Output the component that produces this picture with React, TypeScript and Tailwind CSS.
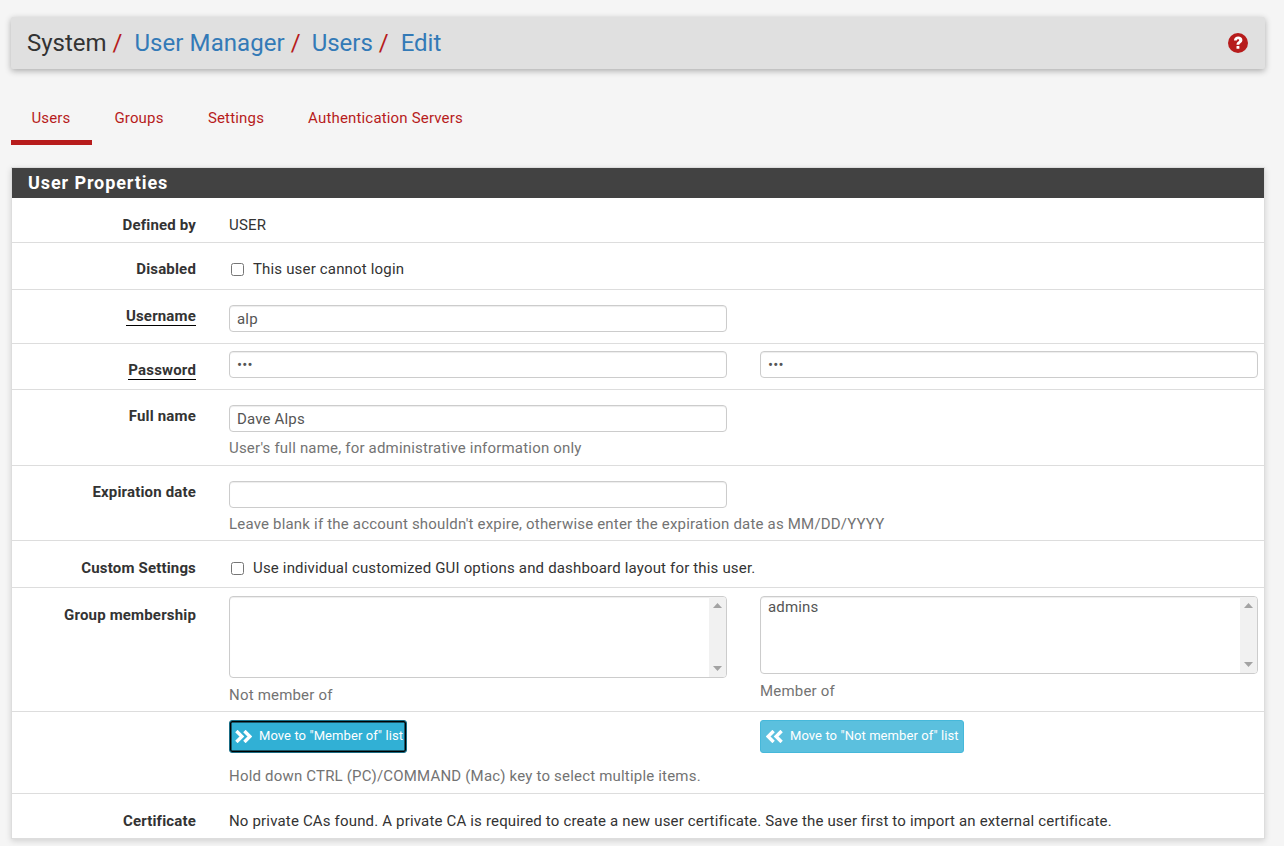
import type { ReactNode } from "react";

function Row({ label, underline, className, children }: { label?: string; underline?: boolean; className: string; children: ReactNode }) {
  return (
    <div className={`flex border-b border-[#dddddd] ${className}`}>
      <div className="w-[184px] shrink-0 text-right font-bold leading-[20px] tracking-[0.17px] text-[#333333]">
        {label && <span className={underline ? "border-b border-black" : ""}>{label}</span>}
      </div>
      <div className="ml-[33px] flex-1">{children}</div>
    </div>
  );
}

function TextInput({ value, type = "text" }: { value: string; type?: string }) {
  return (
    <input
      readOnly
      type={type}
      value={value}
      className="block h-[27px] w-[498px] rounded-[4px] border border-[#cccccc] bg-white px-[7px] text-[15px] tracking-[0.17px] text-[#555555] shadow-[inset_0_1px_1px_rgba(0,0,0,0.075)] outline-none"
    />
  );
}

function ListBox({ height, items }: { height: string; items: string[] }) {
  return (
    <div className={`flex w-[498px] overflow-hidden rounded-[4px] border border-[#cccccc] bg-white shadow-[inset_0_1px_1px_rgba(0,0,0,0.075)] ${height}`}>
      <div className="flex-1 px-[7px] pt-[2px] leading-[17px] text-[#555555]">
        {items.map((item) => (
          <div key={item}>{item}</div>
        ))}
      </div>
      <div className="flex w-[17px] flex-col items-center justify-between bg-[#f1f1f1] py-[6px]">
        <svg width="9" height="5" viewBox="0 0 9 5" className="fill-[#a3a3a3]">
          <path d="M4.5 0L9 5H0z" />
        </svg>
        <svg width="9" height="5" viewBox="0 0 9 5" className="fill-[#a3a3a3]">
          <path d="M0 0h9L4.5 5z" />
        </svg>
      </div>
    </div>
  );
}

function AnglesIcon({ flip }: { flip?: boolean }) {
  return (
    <svg width="17" height="13" viewBox="0 0 17 13" fill="none" stroke="#ffffff" strokeWidth="3.4" className={`mr-[7px] shrink-0 ${flip ? "-scale-x-100" : ""}`}>
      <path d="M1.4 1l5.5 5.5-5.5 5.5" />
      <path d="M9.4 1l5.5 5.5-5.5 5.5" />
    </svg>
  );
}

const hint = "leading-[20px] tracking-[0.19px] text-[#737373]";

export default function App() {
  return (
    <div className="h-[846px] overflow-hidden bg-[#f5f5f5] px-[11px] pt-[17px] font-['Roboto',sans-serif] text-[15px] tracking-[0.17px] text-[#333333]">
      <div className="flex h-[52px] w-[1254px] items-center justify-between rounded-[2px] bg-[#e0e0e0] px-[16px] tracking-normal shadow-[0_2px_6px_rgba(0,0,0,0.3)]">
        <h1 className="text-[24px] leading-[26px] text-[#333333]">
          System<span className="text-[#b71c1c]"> / </span>
          <span className="ml-[6px] tracking-[0.08px] text-[#337ab7]">User Manager</span>
          <span className="text-[#b71c1c]"> / </span>
          <span className="ml-[5px] text-[#337ab7]">Users</span>
          <span className="text-[#b71c1c]"> / </span>
          <span className="ml-[6px] text-[#337ab7]">Edit</span>
        </h1>
        <svg width="20" height="20" viewBox="0 0 20 20" className="mr-[1px]">
          <circle cx="10" cy="10" r="10" fill="#b71c1c" />
          <path d="M5.9 7.4C6.1 4.9 7.9 3.5 10.2 3.5c2.4 0 4.2 1.4 4.2 3.6 0 1.6-.9 2.4-1.9 3.1-.8.5-1.1.9-1.1 1.6H8.5c0-1.7.5-2.4 1.5-3.1.8-.5 1.2-.9 1.2-1.4 0-.6-.5-1-1.1-1-.7 0-1.2.5-1.3 1.3z" fill="#ffffff" />
          <rect x="8.5" y="12.9" width="2.9" height="2.9" rx="0.4" fill="#ffffff" />
        </svg>
      </div>

      <nav className="mt-[23px] flex h-[53px] text-[#b71c1c]">
        <a className="box-content flex w-[80px] items-center justify-center border-b-[5px] border-[#b71c1c] pr-[1px] pt-[5px]">Users</a>
        <a className="flex w-[94px] items-center justify-center">Groups</a>
        <a className="flex w-[100px] items-center justify-center">Settings</a>
        <a className="flex w-[199px] items-center justify-center">Authentication Servers</a>
      </nav>

      <section className="mt-[22px] w-[1254px] border border-[#dddddd] bg-white shadow-[0_2px_6px_rgba(0,0,0,0.15)]">
        <h2 className="flex h-[30px] items-center bg-[#424242] pb-[2px] pl-[16px] text-[18px] font-bold tracking-[0.9px] text-white">User Properties</h2>

        <Row label="Defined by" className="h-[45px] pt-[17px]">
          <div className="leading-[20px]">USER</div>
        </Row>
        <Row label="Disabled" className="h-[47px] pt-[16px]">
          <label className="flex items-center leading-[20px]">
            <input type="checkbox" className="ml-[2px] mr-[9px] h-[13px] w-[13px]" />
            This user cannot login
          </label>
        </Row>
        <Row label="Username" underline className="h-[54px] pt-[16px]">
          <div className="-mt-[1px]">
            <TextInput value="alp" />
          </div>
        </Row>
        <Row label="Password" underline className="h-[46px] pt-[16px]">
          <div className="-mt-[9px] flex gap-[33px]">
            <TextInput type="password" value="abc" />
            <TextInput type="password" value="abc" />
          </div>
        </Row>
        <Row label="Full name" className="h-[76px] pt-[16px]">
          <div className="-mt-[1px]">
            <TextInput value="Dave Alps" />
            <div className={`mt-[6px] ${hint}`}>User's full name, for administrative information only</div>
          </div>
        </Row>
        <Row label="Expiration date" className="h-[75px] pt-[16px]">
          <div className="-mt-[1px]">
            <TextInput value="" />
            <div className={`mt-[6px] ${hint}`}>Leave blank if the account shouldn't expire, otherwise enter the expiration date as MM/DD/YYYY</div>
          </div>
        </Row>
        <Row label="Custom Settings" className="h-[47px] pt-[17px]">
          <label className="flex items-center leading-[20px]">
            <input type="checkbox" className="ml-[2px] mr-[9px] h-[13px] w-[13px]" />
            Use individual customized GUI options and dashboard layout for this user.
          </label>
        </Row>
        <Row label="Group membership" className="h-[124px] pt-[17px]">
          <div className="-mt-[9px] flex gap-[33px]">
            <div>
              <ListBox height="h-[82px]" items={[]} />
              <div className={`mt-[7px] ${hint}`}>Not member of</div>
            </div>
            <div>
              <ListBox height="h-[78px]" items={["admins"]} />
              <div className={`mt-[7px] ${hint}`}>Member of</div>
            </div>
          </div>
        </Row>
        <Row className="h-[82px] pt-[8px]">
          <div className="flex gap-[33px]">
            <div className="w-[498px]">
              <button className="flex h-[33px] w-[178px] items-center rounded-[3px] border border-[#1b6d85] bg-[#31b0d5] pb-[1px] pl-[5px] text-[13px] tracking-[0.08px] text-white shadow-[inset_0_0_0_1.5px_#000000]">
                <AnglesIcon />
                <span className="whitespace-nowrap">Move to "Member of" list</span>
              </button>
            </div>
            <button className="flex h-[33px] w-[204px] items-center rounded-[3px] border border-[#46b8da] bg-[#5bc0de] pb-[1px] pl-[5px] text-[13px] tracking-[0.08px] text-white">
              <AnglesIcon flip />
              <span className="whitespace-nowrap">Move to "Not member of" list</span>
            </button>
          </div>
          <div className={`mt-[13px] ${hint}`}>Hold down CTRL (PC)/COMMAND (Mac) key to select multiple items.</div>
        </Row>
        <div className="flex h-[44px] pt-[17px]">
          <div className="w-[184px] shrink-0 text-right font-bold leading-[20px] tracking-[0.17px]">Certificate</div>
          <div className="ml-[33px] leading-[20px]">No private CAs found. A private CA is required to create a new user certificate. Save the user first to import an external certificate.</div>
        </div>
      </section>
    </div>
  );
}
